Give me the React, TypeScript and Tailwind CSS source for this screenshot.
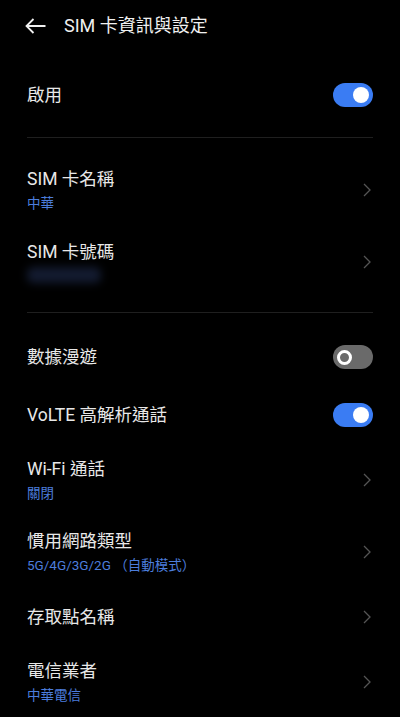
import React from 'react';

const font = { fontFamily: "Roboto, 'Noto Sans CJK TC', sans-serif" };

function Toggle({ on }: { on: boolean }) {
  if (on) {
    return (
      <div className="w-[40px] h-[24px] rounded-full bg-[#3a7cf3] flex items-center justify-end pr-[4px]">
        <div className="w-[16px] h-[16px] rounded-full bg-white" />
      </div>
    );
  }
  return (
    <div className="w-[40px] h-[24px] rounded-full bg-[#6a6a6a] flex items-center pl-[4px]">
      <div className="w-[15px] h-[15px] rounded-full border-[3.5px] border-white bg-[#6a6a6a]" />
    </div>
  );
}

function Chevron() {
  return (
    <svg width="10" height="16" viewBox="0 0 10 16" className="mr-[1px]">
      <path d="M2 2 L8 8 L2 14" fill="none" stroke="#555555" strokeWidth="1.3" />
    </svg>
  );
}

function SwitchRow({ title, on, h }: { title: string; on: boolean; h: string }) {
  return (
    <div className={`flex items-center justify-between px-[27px] ${h}`}>
      <span className="text-[17.5px] leading-[22px] text-[#e8e8e8]">{title}</span>
      <Toggle on={on} />
    </div>
  );
}

function LinkRow({ title, sub, blur }: { title: string; sub?: string; blur?: boolean }) {
  const tall = sub !== undefined || blur;
  return (
    <div className={`flex items-center justify-between pl-[27px] pr-[27px] ${tall ? 'h-[72px]' : 'h-[58px]'}`}>
      <div className="flex flex-col gap-[4px]">
        <span className="text-[17.5px] leading-[22px] text-[#e8e8e8]">{title}</span>
        {sub && <span className="text-[13.5px] leading-[18px] text-[#4c7ddc]">{sub}</span>}
        {blur && <div className="w-[74px] h-[16px] bg-[#131b30] rounded-[6px] blur-[4px]" />}
      </div>
      <Chevron />
    </div>
  );
}

export default function App() {
  return (
    <div className="w-[400px] h-[717px] bg-black overflow-hidden" style={font}>
      {/* Header */}
      <div className="h-[52px] flex items-center pl-[25px]">
        <svg width="22" height="16" viewBox="0 0 22 16">
          <path d="M1.5 8 H20.5 M8.5 1 L1.5 8 L8.5 15" fill="none" stroke="#f0f0f0" strokeWidth="1.8" />
        </svg>
        <span className="ml-[17px] text-[18px] leading-[22px] text-[#f0f0f0]">SIM 卡資訊與設定</span>
      </div>

      <SwitchRow title="啟用" on h="h-[85px]" />
      <div className="mx-[27px] h-[1px] bg-[#1f1f1f]" />

      <div className="pt-[16px] pb-[14px]">
        <LinkRow title="SIM 卡名稱" sub="中華" />
        <LinkRow title="SIM 卡號碼" blur />
      </div>
      <div className="mx-[27px] h-[1px] bg-[#1f1f1f]" />

      <div className="pt-[15px]">
        <SwitchRow title="數據漫遊" on={false} h="h-[58px]" />
        <SwitchRow title="VoLTE 高解析通話" on h="h-[58px]" />
        <LinkRow title="Wi-Fi 通話" sub="關閉" />
        <LinkRow title="慣用網路類型" sub="5G/4G/3G/2G （自動模式）" />
        <LinkRow title="存取點名稱" />
        <LinkRow title="電信業者" sub="中華電信" />
      </div>
    </div>
  );
}
